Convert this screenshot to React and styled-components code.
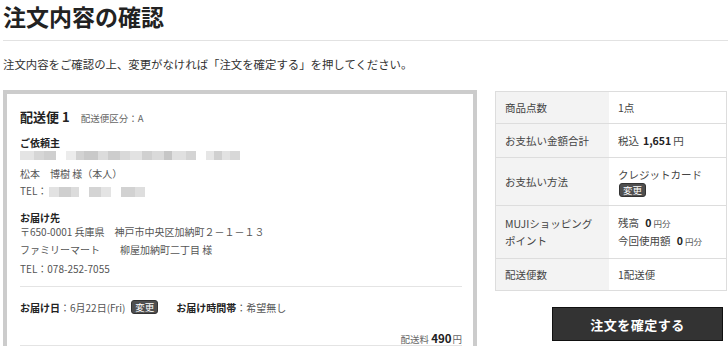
import styled, { createGlobalStyle } from "styled-components";

const GlobalStyle = createGlobalStyle`
  html, body {
    margin: 0;
    padding: 0;
    background: #fff;
    overflow: hidden;
  }
  body {
    font-family: "Noto Sans CJK JP", "Noto Sans", sans-serif;
    color: #333;
  }
  * { box-sizing: border-box; }
`;

const blurTop = [
  [14, "#e4e4e4"], [10, "#d6d6d6"], [12, "#cfcfcf"], [0, ""], [10, "#ececec"],
  [8, "#d2d2d2"], [14, "#c9c9c9"], [10, "#dcdcdc"], [12, "#cdcdcd"], [10, "#d9d9d9"],
  [12, "#e2e2e2"], [10, "#d0d0d0"], [12, "#dadada"], [8, "#c6c6c6"], [14, "#e0e0e0"],
  [10, "#d4d4d4"], [0, ""], [8, "#e6e6e6"], [8, "#d0d0d0"], [8, "#e2e2e2"], [10, "#d8d8d8"],
];

const blurTel = [
  [10, "#e2e2e2"], [12, "#cfcfcf"], [8, "#dcdcdc"], [0, ""], [12, "#d4d4d4"],
  [10, "#e4e4e4"], [0, ""], [14, "#d2d2d2"], [10, "#dedede"],
];

const Page = styled.div`
  width: 728px;
  padding-left: 3px;
`;

const Title = styled.h1`
  margin: 0;
  height: 40px;
  font-size: 23px;
  font-weight: 700;
  line-height: 32px;
  color: #222;
  border-bottom: 1px solid #e2e2e2;
  box-sizing: content-box;
`;

const Lead = styled.p`
  margin: 15px 0 0;
  font-size: 11.4px;
  line-height: 16px;
  color: #333;
`;

const Main = styled.div`
  display: flex;
  align-items: flex-start;
  gap: 18px;
  margin-top: 18px;
`;

const Card = styled.section`
  width: 474px;
  flex: none;
  border: 4px solid #cccccc;
  padding: 13px 11px 60px 13px;
`;

const ShipHead = styled.div`
  display: flex;
  align-items: baseline;
  gap: 11px;
  line-height: 20px;
`;

const ShipNo = styled.span`
  font-size: 13px;
  font-weight: 700;
  color: #222;
`;

const ShipSub = styled.span`
  font-size: 9.5px;
  color: #666;
`;

const SectionLabel = styled.div`
  margin-top: ${(p) => p.$mt}px;
  font-size: 10px;
  font-weight: 700;
  line-height: 12px;
  color: #222;
`;

const BlurRow = styled.div`
  display: flex;
  height: 9px;
  margin-top: 2px;
`;

const BlurInline = styled.span`
  display: inline-flex;
  height: 10px;
  vertical-align: middle;
  margin-left: 2px;
`;

const Pixel = styled.span`
  display: block;
  height: 100%;
  width: ${(p) => (p.$gap ? 10 : p.$w)}px;
  background: ${(p) => (p.$gap ? "transparent" : p.$c)};
`;

const Line = styled.div`
  margin-top: ${(p) => p.$mt || 0}px;
  font-size: 10px;
  line-height: ${(p) => p.$lh || 17}px;
  color: #555;
  white-space: pre;
`;

const Divider = styled.hr`
  margin: ${(p) => p.$mt}px 0 0;
  border: 0;
  border-top: 1px solid #e4e4e4;
`;

const DateRow = styled.div`
  display: flex;
  align-items: center;
  margin-top: 11px;
  height: 18px;
  font-size: 10px;
  color: #555;
`;

const Strong = styled.b`
  font-weight: 700;
  color: #222;
  margin-left: ${(p) => p.$ml || 0}px;
`;

const Badge = styled.span`
  display: inline-block;
  margin-left: ${(p) => p.$ml || 0}px;
  padding: 0 3px;
  font-size: 9.5px;
  line-height: 12px;
  color: #fff;
  background: #4f4f4f;
  border: 1px solid #333;
  border-radius: 3px;
`;

const Fee = styled.div`
  margin-top: 15px;
  height: 15px;
  line-height: 14px;
  text-align: right;
  font-size: 9.5px;
  color: #666;
  border-bottom: 1px solid #e4e4e4;

  b {
    font-size: 11.5px;
    font-weight: 700;
    color: #222;
    margin: 0 1px 0 2px;
  }
`;

const Side = styled.aside`
  width: 232px;
  flex: none;
  display: flex;
  flex-direction: column;
  margin-top: 1px;
`;

const Table = styled.div`
  border: 1px solid #dddddd;
`;

const Row = styled.div`
  display: grid;
  grid-template-columns: 113px 1fr;
  height: ${(p) => p.$h}px;
  border-bottom: ${(p) => (p.$last ? "none" : "1px solid #dddddd")};
`;

const Label = styled.div`
  display: flex;
  flex-direction: column;
  justify-content: center;
  padding: 0 9px;
  background: #f3f3f3;
  font-size: 10.5px;
  line-height: 17px;
  color: #444;
  white-space: nowrap;
`;

const Value = styled.div`
  display: flex;
  flex-direction: column;
  justify-content: center;
  align-items: flex-start;
  padding: 0 9px;
  font-size: 10.5px;
  line-height: 17px;
  color: #444;

  b {
    font-weight: 700;
    color: #222;
    margin: 0 2px 0 4px;
  }
`;

const Small = styled.span`
  font-size: 8.5px;
  color: #555;
`;

const ConfirmButton = styled.button`
  align-self: flex-end;
  margin: 16px 4px 0 0;
  width: 171px;
  height: 34px;
  background: #333;
  border: 1px solid #111;
  color: #fff;
  font-family: inherit;
  font-size: 13px;
  font-weight: 700;
  letter-spacing: 0.5px;
  cursor: pointer;
`;

const Blur = ({ cells, inline }) => {
  const Wrap = inline ? BlurInline : BlurRow;
  return (
    <Wrap>
      {cells.map(([w, c], i) => (
        <Pixel key={i} $w={w} $c={c} $gap={w === 0} />
      ))}
    </Wrap>
  );
};

const App = () => {
  return (
    <Page>
      <GlobalStyle />
      <Title>注文内容の確認</Title>
      <Lead>注文内容をご確認の上、変更がなければ「注文を確定する」を押してください。</Lead>

      <Main>
        <Card>
          <ShipHead>
            <ShipNo>配送便 1</ShipNo>
            <ShipSub>配送便区分：A</ShipSub>
          </ShipHead>

          <SectionLabel $mt={9}>ご依頼主</SectionLabel>
          <Blur cells={blurTop} />
          <Line $mt={5}>松本　博樹 様（本人）</Line>
          <Line>
            TEL：
            <Blur cells={blurTel} inline />
          </Line>

          <SectionLabel $mt={13}>お届け先</SectionLabel>
          <Line $lh={16}>〒650-0001 兵庫県　神戸市中央区加納町２－１－１３</Line>
          <Line $lh={19}>ファミリーマート　　柳屋加納町二丁目 様</Line>
          <Line $lh={19}>TEL：078-252-7055</Line>

          <Divider $mt={8} />
          <DateRow>
            <Strong>お届け日</Strong>：6月22日(Fri)
            <Badge $ml={6}>変更</Badge>
            <Strong $ml={18}>お届け時間帯</Strong>：希望無し
          </DateRow>
          <Fee>
            配送料<b>490</b>円
          </Fee>
        </Card>

        <Side>
          <Table>
            <Row $h={32}>
              <Label>商品点数</Label>
              <Value>1点</Value>
            </Row>
            <Row $h={34}>
              <Label>お支払い金額合計</Label>
              <Value>
                <span>
                  税込<b>1,651</b>円
                </span>
              </Value>
            </Row>
            <Row $h={48}>
              <Label>お支払い方法</Label>
              <Value>
                <span>クレジットカード</span>
                <Badge $ml={1}>変更</Badge>
              </Value>
            </Row>
            <Row $h={53}>
              <Label>
                <span>MUJIショッピング</span>
                <span>ポイント</span>
              </Label>
              <Value>
                <span>
                  残高 <b>0</b>
                  <Small>円分</Small>
                </span>
                <span>
                  今回使用額 <b>0</b>
                  <Small>円分</Small>
                </span>
              </Value>
            </Row>
            <Row $h={31} $last>
              <Label>配送便数</Label>
              <Value>1配送便</Value>
            </Row>
          </Table>
          <ConfirmButton>注文を確定する</ConfirmButton>
        </Side>
      </Main>
    </Page>
  );
};

export default App;
